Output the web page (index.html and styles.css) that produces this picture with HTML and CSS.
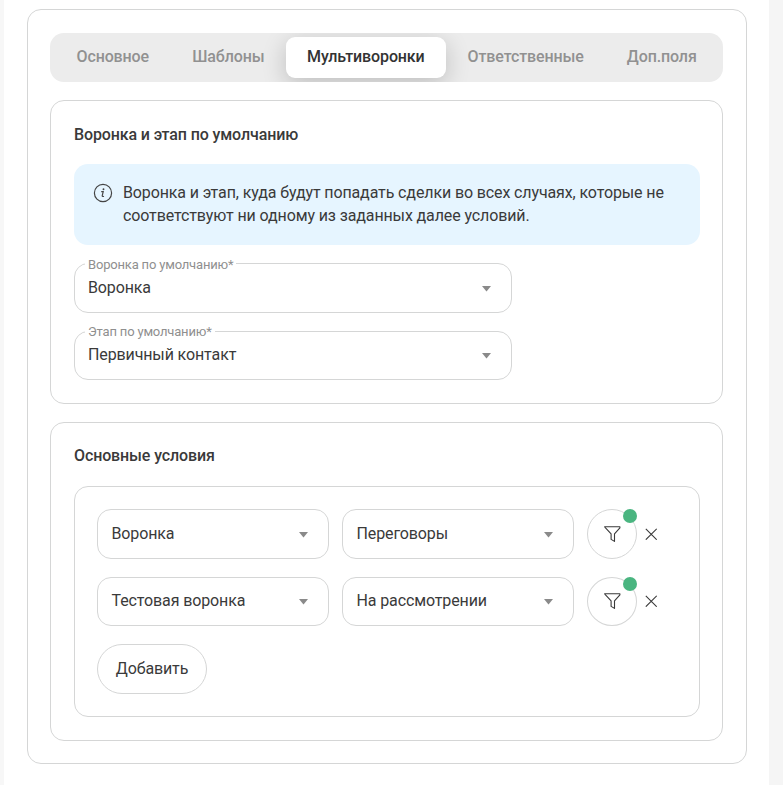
FILE: index.html
```html
<!DOCTYPE html>
<html lang="ru">
<head>
<meta charset="utf-8">
<title>Мультиворонки</title>
<link rel="stylesheet" href="styles.css">
</head>
<body>
<svg class="sprite" aria-hidden="true">
  <symbol id="filter" viewBox="0 0 18 18"><path d="M1.7 1.8h15.2v1l-5.4 6v7.6l-3.4-2V8.8l-5.6-6z" fill="none" stroke="#3a3a3a" stroke-width="1.1" stroke-linejoin="round"/></symbol>
  <symbol id="close" viewBox="0 0 12 12"><path d="M.8.8l10.9 10.9M11.7.8L.8 11.7" fill="none" stroke="#3a3a3a" stroke-width="1.1"/></symbol>
  <symbol id="arrow" viewBox="0 0 9 6"><path d="M0 0h9L4.5 5.6z" fill="#8a8a8a"/></symbol>
</svg>
<main class="page">
  <div class="card">
    <nav class="tabs">
      <a class="tab">Основное</a>
      <a class="tab">Шаблоны</a>
      <a class="tab tab-active">Мультиворонки</a>
      <a class="tab">Ответственные</a>
      <a class="tab">Доп.поля</a>
    </nav>
    <section class="section defaults">
      <h2 class="title">Воронка и этап по умолчанию</h2>
      <div class="notice">
        <svg class="info" viewBox="0 0 20 20"><circle cx="10" cy="10" r="8.6" fill="none" stroke="#444" stroke-width="1.2"/><path d="M8.2 8.6h2l-1 4.2q-.1 1.1 1.8.4" fill="none" stroke="#444" stroke-width="1.2"/><circle cx="10.5" cy="6.3" r=".95" fill="#444"/></svg>
        <p class="notice-text">Воронка и этап, куда будут попадать сделки во всех случаях, которые не соответствуют ни одному из заданных далее условий.</p>
      </div>
      <div class="select select-wide">
        <span class="label">Воронка по умолчанию*</span>
        <span class="value">Воронка</span>
        <svg class="arrow"><use href="#arrow"/></svg>
      </div>
      <div class="select select-wide select-short">
        <span class="label">Этап по умолчанию*</span>
        <span class="value">Первичный контакт</span>
        <svg class="arrow"><use href="#arrow"/></svg>
      </div>
    </section>
    <section class="section conditions">
      <h2 class="title">Основные условия</h2>
      <div class="group">
        <div class="row">
          <div class="select"><span class="value">Воронка</span><svg class="arrow"><use href="#arrow"/></svg></div>
          <div class="select"><span class="value">Переговоры</span><svg class="arrow"><use href="#arrow"/></svg></div>
          <button class="filter"><svg class="filter-icon"><use href="#filter"/></svg><span class="dot"></span></button>
          <svg class="close"><use href="#close"/></svg>
        </div>
        <div class="row row-short">
          <div class="select"><span class="value">Тестовая воронка</span><svg class="arrow"><use href="#arrow"/></svg></div>
          <div class="select"><span class="value">На рассмотрении</span><svg class="arrow"><use href="#arrow"/></svg></div>
          <button class="filter"><svg class="filter-icon"><use href="#filter"/></svg><span class="dot"></span></button>
          <svg class="close"><use href="#close"/></svg>
        </div>
        <button class="add">Добавить</button>
      </div>
    </section>
  </div>
</main>
</body>
</html>
```
FILE: styles.css
```css
* { box-sizing: border-box; }
body {
  margin: 0;
  height: 785px;
  overflow: hidden;
  background: #f5f5f5;
  color: #3a3a3a;
  font: 16px/23px Roboto, "Liberation Sans", sans-serif;
  letter-spacing: -.12px;
}
.sprite { display: none; }
.page {
  height: 785px;
  margin-right: 14px;
  padding: 9px 22px 0 23px;
  border-left: 4px solid #f7f7f7;
  background: #fff;
}
.card {
  height: 755px;
  padding: 23px 23px 0 22px;
  border: 1px solid #d5d6d6;
  border-radius: 14px;
}
.tabs {
  display: flex;
  height: 49px;
  padding: 4px;
  overflow: hidden;
  border-radius: 14px;
  background: #ececec;
}
.tab {
  padding: 8px 21.6px 0;
  color: #919191;
  font-weight: 500;
  white-space: nowrap;
}
.tab:first-child { padding-left: 22.5px; }
.tab-active {
  width: 160px;
  padding-left: 21px;
  border-radius: 9px;
  background: #fff;
  color: #333;
  box-shadow: 0 6px 24px rgba(0, 0, 0, .2);
}
.section {
  margin-top: 18px;
  padding: 22px 22px 0 23px;
  border: 1px solid #d5d6d6;
  border-radius: 14px;
}
.defaults { height: 304px; }
.conditions { height: 319px; padding-top: 21px; }
.title { margin: 0; font-size: 16px; font-weight: 500; line-height: 23px; }
.notice {
  display: flex;
  height: 81px;
  margin: 18px 0;
  padding: 17px 20px 0 19px;
  gap: 10px;
  border-radius: 14px;
  background: #e6f5ff;
}
.info { flex: none; width: 20px; height: 20px; margin-top: 2px; }
.notice-text { margin: 0; }
.select {
  position: relative;
  display: flex;
  justify-content: space-between;
  width: 232px;
  height: 50px;
  padding: 12px 20px 0 13.5px;
  border: 1px solid #d5d6d6;
  border-radius: 14px;
}
.select-wide { width: 438px; padding: 12px 20px 0 13px; margin-bottom: 18px; }
.select-short { height: 49px; padding-top: 11px; }
.label {
  position: absolute;
  top: -9px;
  left: 10px;
  padding: 0 3px;
  background: #fff;
  color: #8f8f8f;
  font-size: 13px;
  line-height: 20px;
  letter-spacing: -.18px;
}
.select-short .label { top: -10px; }
.arrow { width: 9px; height: 6px; margin-top: 10px; }
.group {
  height: 231px;
  margin-top: 19px;
  padding: 22px;
  border: 1px solid #d5d6d6;
  border-radius: 14px;
}
.row { display: flex; align-items: center; gap: 13px; height: 50px; margin-bottom: 18px; }
.row-short { height: 49px; }
.row-short .select, .row-short .filter { height: 49px; }
.row-short .select { padding-top: 11px; }
.filter {
  position: relative;
  width: 50px;
  height: 50px;
  padding: 0;
  border: 1px solid #d5d6d6;
  border-radius: 50%;
  background: #fff;
}
.filter-icon { display: block; width: 18px; height: 18px; margin: 0 auto; }
.row-short .filter { padding-bottom: 1px; }
.dot {
  position: absolute;
  top: -1px;
  right: -1px;
  width: 14px;
  height: 14px;
  border-radius: 50%;
  background: #4ab580;
}
.close { width: 12px; height: 12px; margin-left: -5px; }
.row-short .close { margin-bottom: 1px; }
.add {
  display: block;
  width: 110px;
  height: 50px;
  padding: 0 0 2px;
  border: 1px solid #d5d6d6;
  border-radius: 25px;
  background: #fff;
  color: inherit;
  font: inherit;
  letter-spacing: inherit;
}
```
